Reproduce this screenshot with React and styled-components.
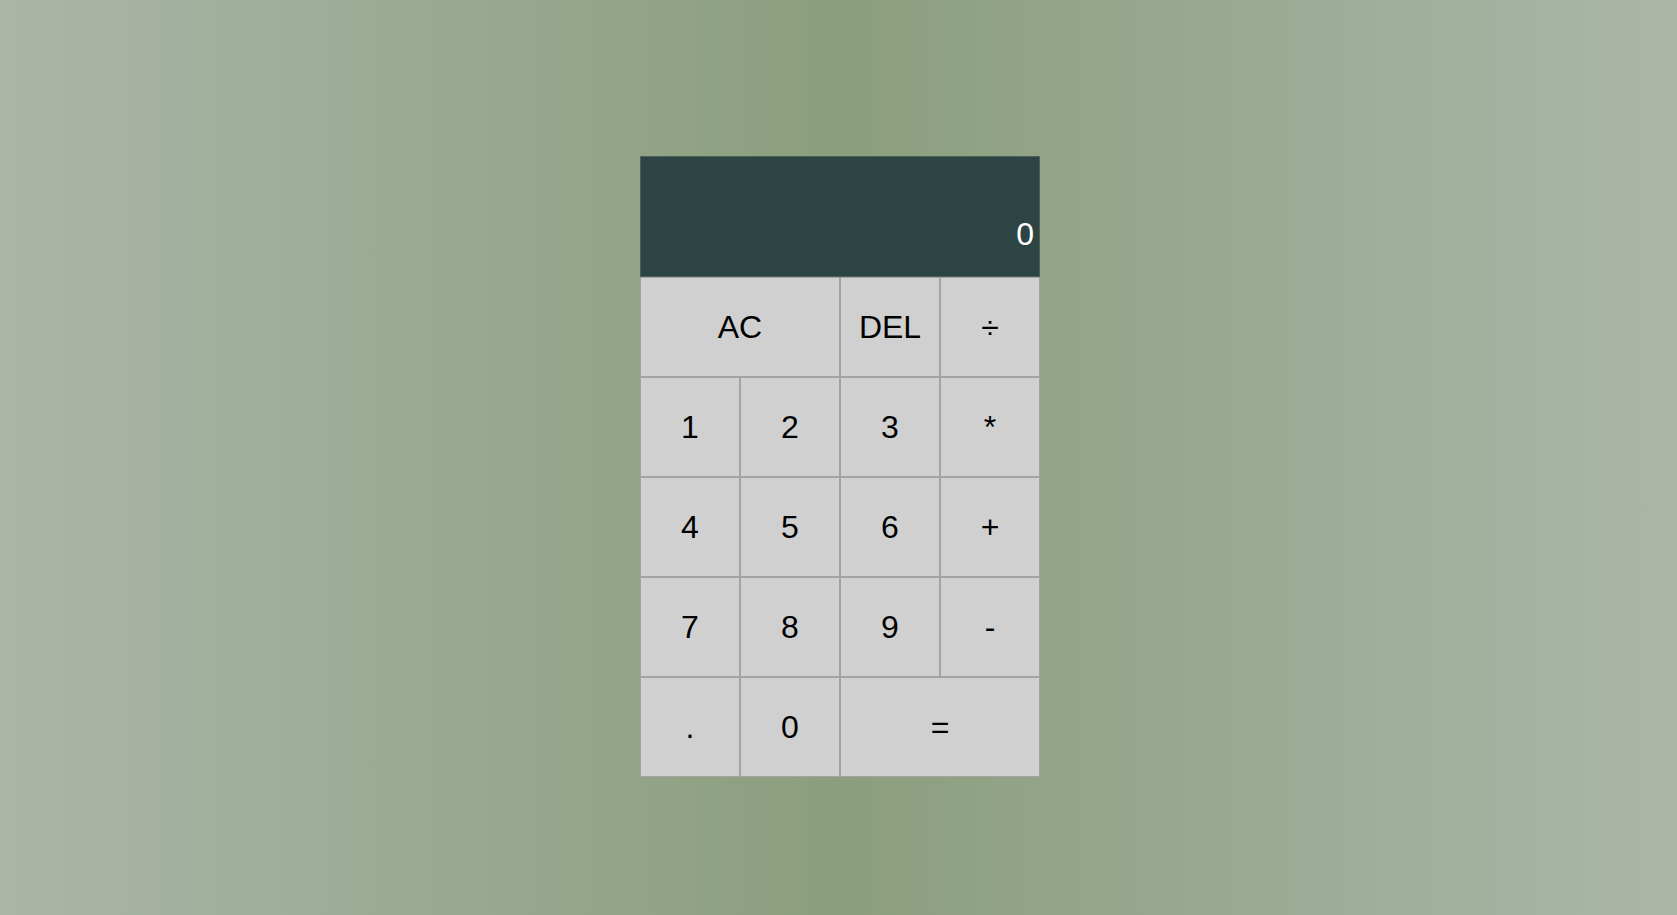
import { useState } from "react";
import styled, { createGlobalStyle } from "styled-components";

const keys = [
  { label: "AC", span: 2 },
  { label: "DEL" },
  { label: "÷" },
  { label: "1" },
  { label: "2" },
  { label: "3" },
  { label: "*" },
  { label: "4" },
  { label: "5" },
  { label: "6" },
  { label: "+" },
  { label: "7" },
  { label: "8" },
  { label: "9" },
  { label: "-" },
  { label: "." },
  { label: "0" },
  { label: "=", span: 2 },
];

const App = () => {
  const [current] = useState("0");
  const [previous] = useState("");

  return (
    <>
      <GlobalStyle />
      <Page>
        <Calculator>
          <Output>
            <PreviousOperand>{previous}</PreviousOperand>
            <CurrentOperand>{current}</CurrentOperand>
          </Output>
          {keys.map(({ label, span }) => (
            <Key key={label} type="button" $span={span}>
              {label}
            </Key>
          ))}
        </Calculator>
      </Page>
    </>
  );
};

// styles
const GlobalStyle = createGlobalStyle`
  *, *::before, *::after {
    box-sizing: border-box;
  }

  body {
    margin: 0;
    font-family: "Liberation Sans", Arial, sans-serif;
    background: linear-gradient(to right, #abb5a8, #8b9e7d 50%, #abb6a9);
  }
`;

const Page = styled.div`
  min-height: 100vh;
  padding: 18px 0 0 3px;
  display: grid;
  justify-content: center;
  align-content: center;
`;

const Calculator = styled.div`
  display: grid;
  grid-template-columns: repeat(4, 100px);
  grid-template-rows: 121px repeat(5, 100px);
`;

const Output = styled.div`
  grid-column: 1 / -1;
  background-color: #2c4544;
  border: 1px solid #4f5f55;
  display: flex;
  flex-direction: column;
  align-items: flex-end;
  justify-content: flex-end;
  padding: 0 5px 23px;
  word-wrap: break-word;
  word-break: break-all;
`;

const PreviousOperand = styled.div`
  color: rgba(255, 255, 255, 0.75);
  font-size: 1.5rem;
`;

const CurrentOperand = styled.div`
  color: #fff;
  font-size: 2rem;
`;

const Key = styled.button`
  grid-column: span ${({ $span }) => $span || 1};
  font-family: "Liberation Sans", Arial, sans-serif;
  font-size: 2rem;
  color: #000;
  background-color: #d0d0d0;
  border: 1px solid #a3a3a3;
  outline: none;
  padding: 0;
  cursor: pointer;

  &:hover {
    background-color: #e2e2e2;
  }
`;

export default App;
